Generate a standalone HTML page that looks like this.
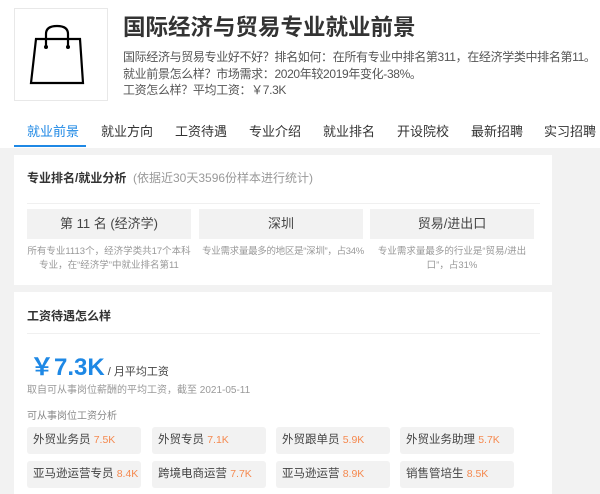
<!DOCTYPE html><html><head><meta charset="utf-8"><style>
*{margin:0;padding:0;box-sizing:border-box}
body{width:600px;height:494px;overflow:hidden;background:#fff;font-family:"Liberation Sans","Noto Sans CJK SC",sans-serif;position:relative;color:#333}
.a{position:absolute;white-space:nowrap}
.gray{position:absolute;left:0;top:148px;width:600px;height:346px;background:#f2f2f2}
.card{position:absolute;left:14px;width:538px;background:#fff}
.box{position:absolute;background:#f2f2f2;text-align:center;line-height:30px;font-size:13px;color:#444}
.d{position:absolute;font-size:9.5px;color:#999;text-align:center;line-height:14px}
.t{position:absolute;width:114px;height:27px;background:#f2f2f2;border-radius:3px;font-size:11.5px;line-height:27px;padding-left:6px;color:#444;white-space:nowrap;overflow:hidden}
.t span{color:#f5894f;font-size:10.5px}
</style></head><body>
<div class="a" style="left:14px;top:8px;width:94px;height:93px;border:1px solid #e8e8e8"></div>
<svg class="a" style="left:14px;top:8px" width="94" height="93" viewBox="14 8 94 93"><path d="M36 39H80L83 83H31Z" fill="none" stroke="#000" stroke-width="2.2"/><path d="M46 47V34Q46 26 57 26Q68 26 68 34V47" fill="none" stroke="#000" stroke-width="2.2"/><circle cx="46" cy="47" r="2" /><circle cx="68" cy="47" r="2"/></svg>
<div class="a" style="left:123px;top:10px;font-size:22.5px;font-weight:bold;color:#333">国际经济与贸易专业就业前景</div>
<div class="a" style="left:123px;top:49px;font-size:12px;line-height:16.5px;color:#555;letter-spacing:-0.35px">国际经济与贸易专业好不好？排名如何：在所有专业中排名第311，在经济学类中排名第11。<br>就业前景怎么样？市场需求：2020年较2019年变化-38%。<br>工资怎么样？平均工资：￥7.3K</div>
<div class="a" style="top:124px;font-size:13px;line-height:16px;color:#333;left:0;width:600px">
<span class="a" style="left:27px;color:#1e88e5">就业前景</span><span class="a" style="left:101px">就业方向</span><span class="a" style="left:175px">工资待遇</span><span class="a" style="left:249px">专业介绍</span><span class="a" style="left:323px">就业排名</span><span class="a" style="left:397px">开设院校</span><span class="a" style="left:471px">最新招聘</span><span class="a" style="left:544px">实习招聘</span></div>
<div class="a" style="left:14px;top:145px;width:72px;height:2px;background:#1e88e5"></div>
<div class="gray"></div>
<div class="card" style="top:155px;height:130px"></div>
<div class="a" style="left:27px;top:169px;font-size:12px;font-weight:bold;color:#333">专业排名/就业分析 <span style="font-weight:normal;color:#999;font-size:12px">&nbsp;(依据近30天3596份样本进行统计)</span></div>
<div class="a" style="left:27px;top:203px;width:513px;height:1px;background:#f0f0f0"></div>
<div class="box" style="left:27px;top:209px;width:164px;height:30px">第 11 名 (经济学)</div>
<div class="box" style="left:199px;top:209px;width:164px;height:30px">深圳</div>
<div class="box" style="left:370px;top:209px;width:164px;height:30px">贸易/进出口</div>
<div class="d" style="left:25px;top:245px;width:168px">所有专业1113个，经济学类共17个本科专业，在“经济学”中就业排名第11</div>
<div class="d" style="left:195px;top:245px;width:176px;letter-spacing:-0.3px">专业需求量最多的地区是“深圳”，占34%</div>
<div class="d" style="left:368px;top:245px;width:168px">专业需求量最多的行业是“贸易/进出口”，占31%</div>
<div class="card" style="top:292px;height:202px"></div>
<div class="a" style="left:27px;top:307px;font-size:12px;font-weight:bold">工资待遇怎么样</div>
<div class="a" style="left:27px;top:333px;width:513px;height:1px;background:#f0f0f0"></div>
<div class="a" style="left:30px;top:347px;font-size:24px;font-weight:bold;color:#1e88e5">￥7.3K<span style="font-size:11px;color:#444;font-weight:normal"> / 月平均工资</span></div>
<div class="a" style="left:27px;top:381px;font-size:10px;color:#999">取自可从事岗位薪酬的平均工资，截至 2021-05-11</div>
<div class="a" style="left:27px;top:407px;font-size:10px;color:#888">可从事岗位工资分析</div>
<div class="t" style="left:27px;top:427px">外贸业务员 <span>7.5K</span></div>
<div class="t" style="left:152px;top:427px">外贸专员 <span>7.1K</span></div>
<div class="t" style="left:276px;top:427px">外贸跟单员 <span>5.9K</span></div>
<div class="t" style="left:400px;top:427px">外贸业务助理 <span>5.7K</span></div>
<div class="t" style="left:27px;top:461px">亚马逊运营专员 <span>8.4K</span></div>
<div class="t" style="left:152px;top:461px">跨境电商运营 <span>7.7K</span></div>
<div class="t" style="left:276px;top:461px">亚马逊运营 <span>8.9K</span></div>
<div class="t" style="left:400px;top:461px">销售管培生 <span>8.5K</span></div>
</body></html>
